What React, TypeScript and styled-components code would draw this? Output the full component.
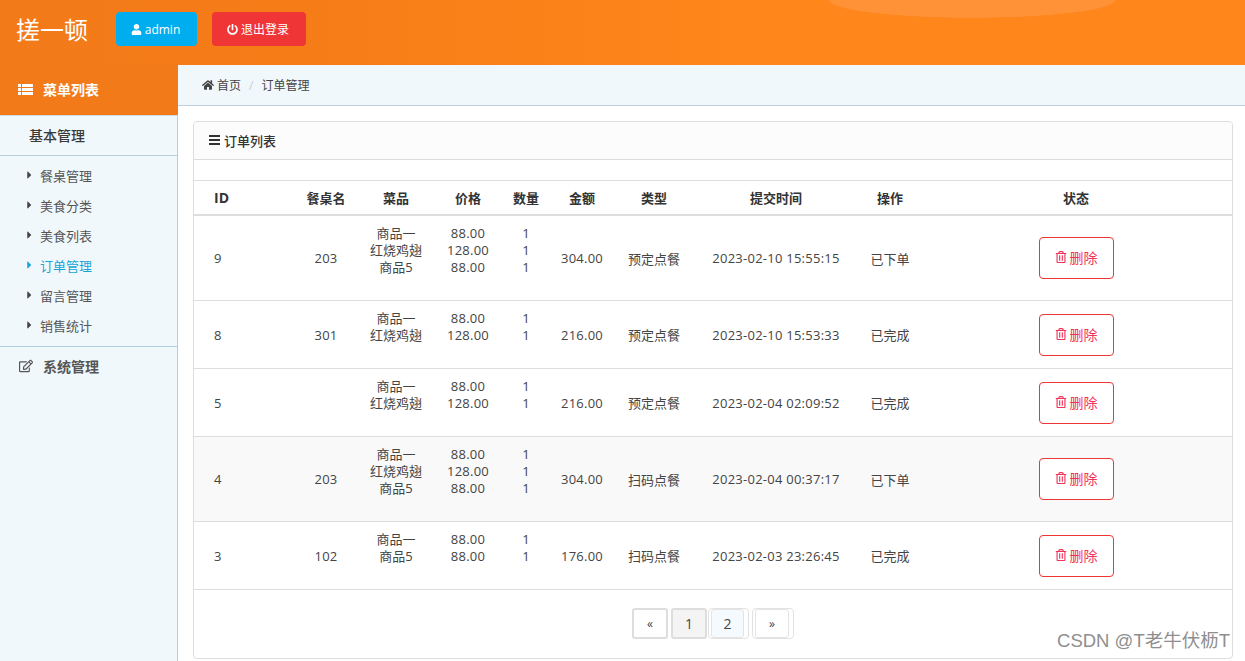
import React from "react";
import styled, { createGlobalStyle } from "styled-components";
import { FaUser, FaPowerOff, FaHome, FaCaretRight, FaRegEdit, FaRegTrashAlt } from "react-icons/fa";

const Global = createGlobalStyle`
  html, body { margin: 0; padding: 0; height: 100%; overflow: hidden; background: #fff; }
  body { font-family: "Open Sans", "Noto Sans CJK SC", sans-serif; font-size: 14px; color: #333; }
  * { box-sizing: border-box; }
`;

const Page = styled.div`
  position: relative;
  width: 1245px;
  height: 661px;
  display: flex;
  flex-direction: column;
  overflow: hidden;
`;

const Header = styled.header`
  height: 65px;
  flex: none;
  display: flex;
  align-items: flex-start;
  padding: 12px 0 0 16px;
  background:
    radial-gradient(ellipse 145px 18px at 972px 0, #ff9236 97%, transparent 100%),
    linear-gradient(90deg, #f37a19 0%, #f67c18 25%, #ff861a 60%, #ff861a 100%);
`;

const Brand = styled.div`
  font-size: 24px;
  line-height: 34px;
  color: #fff;
  width: 100px;
  font-family: "Noto Sans CJK SC", sans-serif;
  font-weight: 400;
`;

const HeadButton = styled.button<{ $bg: string; $w: number }>`
  height: 34px;
  width: ${(p) => p.$w}px;
  margin-right: 15px;
  border: 0;
  border-radius: 4px;
  background: ${(p) => p.$bg};
  color: #fff;
  font: 12px "Open Sans", "Noto Sans CJK SC", sans-serif;
  display: flex;
  align-items: center;
  justify-content: center;
  gap: 3px;
  padding: 0 2px 0 0;
  svg { font-size: 11px; }
`;

const Body = styled.div`
  flex: 1;
  display: flex;
  min-height: 0;
`;

const Side = styled.aside`
  width: 178px;
  flex: none;
  background: #f1f8fc;
  border-right: 1px solid #b9cdd9;
`;

const SideTitle = styled.div`
  height: 51px;
  background: #f37a19;
  margin-right: -1px;
  border-bottom: 1px solid #cfdbe3;
  color: #fff;
  font-weight: 700;
  font-size: 14px;
  display: flex;
  align-items: center;
  padding: 0 0 2px 18px;
  gap: 10px;
`;

const SubHead = styled.div`
  height: 40px;
  line-height: 39px;
  padding-left: 29px;
  font-size: 14px;
  font-weight: 500;
  color: #3a3a3a;
  border-bottom: 1px solid #b9d0dc;
`;

const Menu = styled.ul`
  list-style: none;
  margin: 0;
  padding: 4px 0 6px;
  border-bottom: 1px solid #add1de;
`;

const MenuItem = styled.li<{ $on?: boolean }>`
  height: 30px;
  display: flex;
  align-items: center;
  padding-left: 27px;
  font-size: 13px;
  color: ${(p) => (p.$on ? "#1aa3d6" : "#555")};
  svg {
    font-size: 12px;
    width: 5px;
    margin-right: 8px;
    color: ${(p) => (p.$on ? "#1aa3d6" : "#444")};
  }
`;

const SideFoot = styled.div`
  height: 40px;
  display: flex;
  align-items: center;
  padding: 0 0 2px 19px;
  gap: 10px;
  font-size: 14px;
  font-weight: 700;
  color: #555;
  svg { font-size: 14px; }
`;

const Main = styled.main`
  flex: 1;
  min-width: 0;
  display: flex;
  flex-direction: column;
`;

const Crumbs = styled.nav`
  height: 41px;
  flex: none;
  background: #f1f8fc;
  border-bottom: 1px solid #bdd0dc;
  display: flex;
  align-items: center;
  padding: 0 0 0 24px;
  font-size: 12px;
  color: #444;
  svg { font-size: 12px; margin-right: 3px; }
`;

const CrumbSep = styled.span`
  color: #ccc;
  margin: 0 8px;
`;

const Card = styled.section`
  margin: 15px 12px 0 15px;
  width: 1040px;
  height: 538px;
  border: 1px solid #ddd;
  border-radius: 4px;
  overflow: hidden;
  background: #fff;
`;

const CardTitle = styled.div`
  height: 38px;
  padding: 0 0 1px 15px;
  display: flex;
  align-items: center;
  gap: 4px;
  font-size: 13px;
  font-weight: 500;
  color: #333;
  background: #fcfcfc;
  border-bottom: 1px solid #ddd;
`;

const Gap = styled.div`
  height: 20px;
`;

const Table = styled.table`
  width: 1038px;
  table-layout: fixed;
  border-collapse: collapse;
  font-size: 13px;
  color: #444;
  text-align: center;
`;

const Th = styled.th<{ $left?: boolean }>`
  height: 34px;
  border-top: 1px solid #ddd;
  border-bottom: 2px solid #ddd;
  font-size: ${(p) => (p.$left ? "14px" : "13px")};
  font-weight: 700;
  color: #333;
  text-align: ${(p) => (p.$left ? "left" : "center")};
  padding: 0 0 0 ${(p) => (p.$left ? "20px" : "0")};
`;

const Row = styled.tr<{ $alt?: boolean }>`
  background: ${(p) => (p.$alt ? "#f9f9f9" : "#fff")};
  border-bottom: 1px solid #ddd;
`;

const Td = styled.td<{ $left?: boolean; $num?: boolean }>`
  padding: 1px 0 0 ${(p) => (p.$left ? "20px" : "0")};
  text-align: ${(p) => (p.$left ? "left" : "center")};
  white-space: nowrap;
  vertical-align: middle;
  letter-spacing: ${(p) => (p.$num ? "0.25px" : "0")};
`;

const Lines = styled.div`
  line-height: 17px;
  padding: 8px 0 24px;
`;

const DelButton = styled.button`
  width: 75px;
  height: 42px;
  border: 1px solid #ef3535;
  border-radius: 4px;
  background: #fff;
  color: #f0325a;
  font: 14px "Open Sans", "Noto Sans CJK SC", sans-serif;
  display: inline-flex;
  align-items: center;
  justify-content: center;
  gap: 3px;
  padding: 0 0 2px;
  vertical-align: middle;
  svg { font-size: 12px; }
`;

const Pager = styled.div`
  height: 68px;
  display: flex;
  align-items: flex-start;
  padding: 18px 0 0 438px;
  color: #444;
`;

const PageItem = styled.span<{ $cur?: boolean; $small?: boolean }>`
  width: 36px;
  height: 31px;
  margin-right: ${(p) => (p.$cur ? "1px" : "3px")};
  display: flex;
  align-items: center;
  justify-content: center;
  font-size: ${(p) => (p.$small ? "12px" : "14px")};
  border-radius: 3px;
  border: 2px solid #ddd;
  background: ${(p) => (p.$cur ? "#f4f4f4" : "#fff")};
`;

const PageFrame = styled.span<{ $w: number; $gap: number }>`
  width: ${(p) => p.$w}px;
  height: 31px;
  margin-right: ${(p) => p.$gap}px;
  padding: 0 4px 0 2px;
  border: 1px solid #e2e2e2;
  border-radius: 4px;
  display: flex;
`;

const PageInner = styled.span<{ $tint?: boolean; $small?: boolean }>`
  flex: 1;
  display: flex;
  align-items: center;
  justify-content: center;
  font-size: ${(p) => (p.$small ? "12px" : "14px")};
  border-radius: 3px;
  border: 1px solid #e4e4e4;
  background: ${(p) => (p.$tint ? "#f5fafe" : "#fff")};
`;

const Watermark = styled.div`
  position: absolute;
  right: 15px;
  bottom: 9px;
  font-size: 18.5px;
  line-height: 22px;
  color: #8f8f8f;
  font-family: "Liberation Sans", "Noto Sans CJK SC", sans-serif;
`;

function ListIcon() {
  return (
    <svg width="15" height="11" viewBox="0 0 15 11" fill="currentColor" aria-hidden="true">
      <rect x="0" y="0" width="3" height="3" />
      <rect x="4" y="0" width="11" height="3" />
      <rect x="0" y="4" width="3" height="3" />
      <rect x="4" y="4" width="11" height="3" />
      <rect x="0" y="8" width="3" height="3" />
      <rect x="4" y="8" width="11" height="3" />
    </svg>
  );
}

function BarsIcon() {
  return (
    <svg width="11" height="10" viewBox="0 0 11 10" fill="#333" aria-hidden="true">
      <rect x="0" y="0" width="11" height="2" />
      <rect x="0" y="4" width="11" height="2" />
      <rect x="0" y="8" width="11" height="2" />
    </svg>
  );
}

type Order = { id: string; table: string; items: string[][]; total: string; type: string; time: string; st: string; alt?: boolean };

const orders: Order[] = [
  { id: "9", table: "203", items: [["商品一", "88.00"], ["红烧鸡翅", "128.00"], ["商品5", "88.00"]], total: "304.00", type: "预定点餐", time: "2023-02-10 15:55:15", st: "已下单" },
  { id: "8", table: "301", items: [["商品一", "88.00"], ["红烧鸡翅", "128.00"]], total: "216.00", type: "预定点餐", time: "2023-02-10 15:53:33", st: "已完成" },
  { id: "5", table: "", items: [["商品一", "88.00"], ["红烧鸡翅", "128.00"]], total: "216.00", type: "预定点餐", time: "2023-02-04 02:09:52", st: "已完成" },
  { id: "4", table: "203", items: [["商品一", "88.00"], ["红烧鸡翅", "128.00"], ["商品5", "88.00"]], total: "304.00", type: "扫码点餐", time: "2023-02-04 00:37:17", st: "已下单", alt: true },
  { id: "3", table: "102", items: [["商品一", "88.00"], ["商品5", "88.00"]], total: "176.00", type: "扫码点餐", time: "2023-02-03 23:26:45", st: "已完成" },
];

const widths = [98, 68, 72, 72, 44, 68, 76, 168, 60, 312];
const heads = ["ID", "餐桌名", "菜品", "价格", "数量", "金额", "类型", "提交时间", "操作", "状态"];
const links = ["餐桌管理", "美食分类", "美食列表", "订单管理", "留言管理", "销售统计"];

export default function App() {
  return (
    <Page>
      <Global />
      <Header>
        <Brand>搓一顿</Brand>
        <HeadButton $bg="#00aeef" $w={81}><FaUser />admin</HeadButton>
        <HeadButton $bg="#ef3535" $w={94}><FaPowerOff />退出登录</HeadButton>
      </Header>
      <Body>
        <Side>
          <SideTitle><ListIcon />菜单列表</SideTitle>
          <SubHead>基本管理</SubHead>
          <Menu>
            {links.map((l) => (
              <MenuItem key={l} $on={l === "订单管理"}><FaCaretRight />{l}</MenuItem>
            ))}
          </Menu>
          <SideFoot><FaRegEdit />系统管理</SideFoot>
        </Side>
        <Main>
          <Crumbs><FaHome />首页<CrumbSep>/</CrumbSep>订单管理</Crumbs>
          <Card>
            <CardTitle><BarsIcon />订单列表</CardTitle>
            <Gap />
            <Table>
              <colgroup>{widths.map((w, i) => <col key={i} style={{ width: w }} />)}</colgroup>
              <thead>
                <tr>{heads.map((h, i) => <Th key={h} $left={i === 0}>{h}</Th>)}</tr>
              </thead>
              <tbody>
                {orders.map((o) => (
                  <Row key={o.id} $alt={o.alt}>
                    <Td $left>{o.id}</Td>
                    <Td $num>{o.table}</Td>
                    <Td><Lines>{o.items.map((it, i) => <div key={i}>{it[0]}</div>)}</Lines></Td>
                    <Td $num><Lines>{o.items.map((it, i) => <div key={i}>{it[1]}</div>)}</Lines></Td>
                    <Td><Lines>{o.items.map((_, i) => <div key={i}>1</div>)}</Lines></Td>
                    <Td $num>{o.total}</Td>
                    <Td>{o.type}</Td>
                    <Td $num>{o.time}</Td>
                    <Td>{o.st}</Td>
                    <Td><DelButton><FaRegTrashAlt />删除</DelButton></Td>
                  </Row>
                ))}
              </tbody>
            </Table>
            <Pager>
              <PageItem $small>«</PageItem>
              <PageItem $cur>1</PageItem>
              <PageFrame $w={41} $gap={3}><PageInner $tint>2</PageInner></PageFrame>
              <PageFrame $w={42} $gap={0}><PageInner $small>»</PageInner></PageFrame>
            </Pager>
          </Card>
        </Main>
      </Body>
      <Watermark>CSDN @T老牛伏枥T</Watermark>
    </Page>
  );
}
